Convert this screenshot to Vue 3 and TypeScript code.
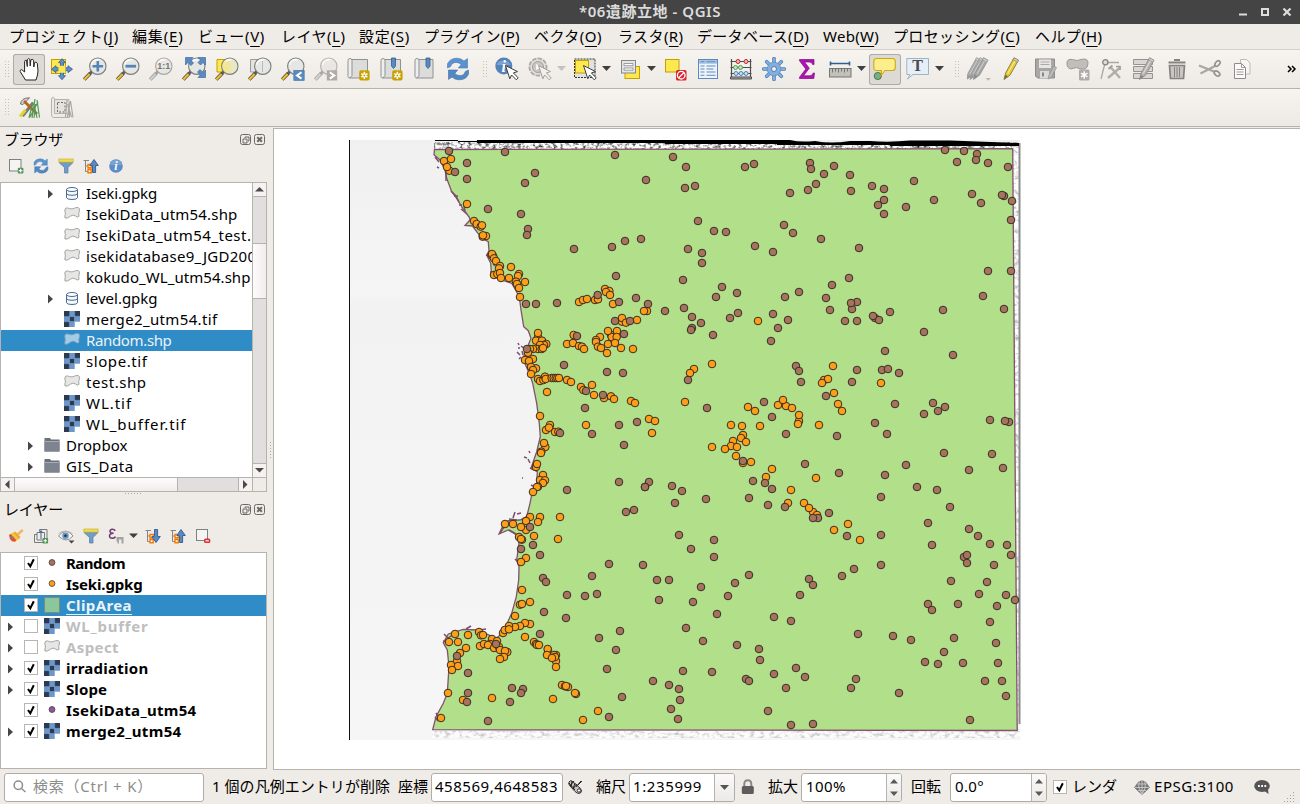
<script setup lang="ts">
import type { Directive } from 'vue'

/* Spreads a label over the given width by adjusting its letter spacing. */
const vFit: Directive<HTMLElement, number> = {
  mounted(el, binding) {
    const n = (el.textContent || '').length
    const w = el.getBoundingClientRect().width
    if (n && binding.value) el.style.letterSpacing = ((binding.value - w) / n).toFixed(3) + 'px'
  },
}

interface Menu { label: string; key: string; cell: number; width: number }
const menus: Menu[] = [
  { label: 'プロジェクト', key: 'J', cell: 123, width: 110 },
  { label: '編集', key: 'E', cell: 66, width: 51.5 },
  { label: 'ビュー', key: 'V', cell: 83, width: 67 },
  { label: 'レイヤ', key: 'L', cell: 78, width: 64.5 },
  { label: '設定', key: 'S', cell: 65, width: 51 },
  { label: 'プラグイン', key: 'P', cell: 110, width: 96 },
  { label: 'ベクタ', key: 'O', cell: 84, width: 68 },
  { label: 'ラスタ', key: 'R', cell: 79, width: 65.5 },
  { label: 'データベース', key: 'D', cell: 126, width: 112 },
  { label: 'Web', key: 'W', cell: 70, width: 56 },
  { label: 'プロセッシング', key: 'C', cell: 142, width: 127 },
  { label: 'ヘルプ', key: 'H', cell: 80, width: 67.5 },
]

const lens = (fill = '#e4e7e4', ring = '#7b7e7a', grip = '#f2c02c', tip = '#4a4a4a') =>
  `<path d="M7.5 16 1.2 22.6" stroke="${tip}" stroke-width="3.6"/><path d="M6.6 16.9 1.3 22.4" stroke="${grip}" stroke-width="2.2"/><path d="M10 13.5 7.6 16" stroke="${tip}" stroke-width="3"/><circle cx="14.8" cy="9.2" r="8.2" fill="${fill}" stroke="${ring}" stroke-width="1.1"/><path d="M8.5 8a6.6 6.6 0 0 1 8-5.2" fill="none" stroke="#fff" stroke-width="1.6" opacity=".8"/>`
const cursor = (f = '#fff', s = '#3c3c3c') =>
  `<path d="M10.5 8.500 22.500 14.600 18.400 15.900 23.200 20.900 21.300 22.800 16.600 18 14.800 21.800Z" fill="${f}" stroke="${s}" stroke-width="1"/>`
const scroll = (x = 1) =>
  `<path d="M${x + 3} 2.5H20.5V21H${x + 1.5}" fill="#dcdcda" stroke="#8f9294"/><path d="M${x} 3.5Q${x} 1.5 ${x + 2} 1.5Q${x + 4} 1.5 ${x + 4} 3.5V18.5L${x + 2} 21Q${x} 21 ${x} 19.5Z" fill="#eeeeec" stroke="#8f9294"/>`
const star = `<rect x="12.2" y="13.2" width="10.4" height="10.4" rx="1.8" fill="#c7a100"/><path d="M17.4 14.8v7.2M14.3 16.6l6.2 3.6M20.5 16.6l-6.2 3.6" stroke="#fff" stroke-width="1.5"/><circle cx="17.4" cy="18.4" r="2" fill="#fff"/><circle cx="17.4" cy="18.4" r="1" fill="#c7a100"/>`
const refresh = `<path d="M1.5 11V6.8Q4 1.2 11 1.2Q15.2 1.2 18 4L21.5 1.6V11H12.3L15.2 7.6Q13 5.4 10.2 5.4Q6 5.4 4.6 9.6Z" fill="#5b93cf" stroke="#4479b3" stroke-width=".6"/><path d="M22.5 13V17.2Q20 22.8 13 22.8Q8.800 22.800 6 20L2.500 22.400V13H11.700L8.800 16.400Q11 18.600 13.800 18.600Q18 18.600 19.400 14.400Z" fill="#5288c4" stroke="#3c6ea6" stroke-width=".6"/>`
const pencil = (x: number, c: string, w = '#eee', d = '#888') =>
  `<path d="M${x} 22.5 ${x + 1.6} 16 ${x + 10} 0.8 ${x + 14.500} 3.200 ${x + 6} 18.200Z" fill="${c}" stroke="${d}" stroke-width=".8"/><path d="M${x + 3.6} 16.8 ${x + 12} 2" stroke="${w}" stroke-width="1.100"/><path d="M${x + 9} 2.6 ${x + 10} .8 ${x + 14.500} 3.200 ${x + 13.500} 5.200Z" fill="#ccc" stroke="${d}" stroke-width=".5"/><path d="M${x} 22.500 ${x + 1.200} 17.700 ${x + 4.200} 19.600Z" fill="${d}"/>`
const raster = `<rect width="16" height="16" fill="#6d96c9"/><path d="M0 0h5.300v5.300h-5.300zM10.700 0h5.300v5.300h-5.300zM5.800 5.800h4.400v4.400h-4.400zM0 10.700h5.300v5.300h-5.300z" fill="#2b3a50"/><path d="M10.700 10.700h5.300v5.300h-5.300z" fill="#fff"/><path d="M5.300 5.300v10.700M10.700 0v10.700M0 10.700h10.700M5.300 5.300h10.700" stroke="#87a9d4" stroke-width=".4"/>`
const shape = (a: string, b: string) =>
  `<path d="M.800 3.500Q1 1.200 3.500 1.400Q5 2.300 8 2.400Q10 2 11.500 1.200Q15 .300 15.400 2.300Q15.600 5 14.700 7L15 9.800Q13.500 11.500 11.500 9.500Q9 7.600 6.500 9.600Q3.500 12.300 1 11.500Q.600 9.500 1.400 7.500Z" transform="translate(0 .5)" fill="${a}" stroke="${b}" stroke-width=".9"/>`
const tree = `<path d="M.500 2.500H6M2.500 2.500V13.500H5M2.500 8H5" stroke="#85858a" fill="none"/><path d="M5 6.500h3.200v3.200h-3.200zM5 11.500h3.200v3.200h-3.200z" fill="#fff" stroke="#f57900" stroke-width="1.400"/>`
const funnel = `<path d="M1 4.500H15L10 9.500V15H6.500V9.500Z" fill="#6f9ccb" stroke="#4f7cab" stroke-width=".7"/><path d="M.800 1H15.200V4.200H.800Z" fill="#f0dc4a" stroke="#c2a92a" stroke-width=".6"/>`

const icons: Record<string, string> = {
  pan: `<path d="M8.500 23 3.200 14.600Q2.800 12.800 4.600 12.600L7.600 15V4.600Q7.800 2.600 9.500 3.400L10.300 9.500V2.600Q11.200.800 12.800 2.200L13.200 9 13.800 3Q15.200 1.400 16.600 3.200L16.800 10 17.600 5.600Q19.200 4.200 20.300 6.200L21 14Q21 17.500 19 23Z" fill="#fff" stroke="#222" stroke-width="1"/>`,
  panSel: `<rect x="1.500" y="2.500" width="14" height="14" fill="#fce94f" stroke="#c4a000"/><path d="M11.500 2 15 6H13v5h4.500V9L22 12.500 17.500 16V14H13v5h2L11.500 23 8 19h2V14H5.500v2L1 12.500 5.500 9v2H10V6H8Z" transform="translate(.5 -.3)" fill="#5f8fc4" stroke="#2e5c8f" stroke-width=".8"/><rect x="8.500" y="8.800" width="7" height="7" fill="#fce94f"/>`,
  zoomIn: lens() + `<path d="M14.800 4v10.500M9.500 9.200h10.600" stroke="#5483b8" stroke-width="2.600"/>`,
  zoomOut: lens() + `<path d="M9.500 9.200h10.600" stroke="#5483b8" stroke-width="2.800"/>`,
  zoomNative: lens('#e8e6e2', '#a9a7a4', '#d2d0cd', '#9c9a97') + `<text x="14.800" y="12.300" text-anchor="middle" font-family="Liberation Sans, sans-serif" font-size="9" font-weight="700" fill="#777">1:1</text>`,
  zoomFull: lens() + `<path d="M3.500.500H11L8.800 3 11.500 6 9 8.500 6 5.500 3.500 8ZM23.500.500V8L21 5.500 18.500 8 16 5.500 18.500 3 16 .500ZM23.500 20.500H16L18.200 18 15.500 15 18 12.500 21 15.500 23.500 13Z" fill="#5c8abf" stroke="#3f6da3" stroke-width=".7"/>`,
  zoomSel: `<path d="M2 2.500H15V15H2Z" fill="#fce94f" stroke="#c4a000"/>` + lens('#e9e8c6') + `<path d="M9 4.500h6.500v11.500h-4Q7 13 7.500 8Z" fill="#f3e68a" opacity=".8"/>`,
  zoomLayer: `<path d="M2.500 2.500H15V15H2.500Z" fill="#e2e4e4" stroke="#9a9c9c"/>` + lens() + `<path d="M14.500 4v11" stroke="#bbb"/>`,
  zoomLast: lens() + `<rect x="12.800" y="13.300" width="10.400" height="10.200" fill="#5c8abf" stroke="#4372a8" stroke-width=".6"/><path d="M20.500 15.200 16 18.400 20.500 21.600" fill="none" stroke="#fff" stroke-width="2"/>`,
  zoomNext: lens('#eae7e3', '#b5b2ae', '#d5d3d0', '#a09e9b') + `<rect x="12.800" y="13.300" width="10.400" height="10.200" fill="#aeaba8"/><path d="M15.800 15.200 20.300 18.400 15.800 21.600" fill="none" stroke="#fff" stroke-width="2"/>`,
  mapNew: scroll() + star,
  bookNew: scroll() + `<path d="M11.500 1h4v8l-2 2.500-2-2.500Z" fill="#5c8abf" stroke="#2e5c8f" stroke-width=".8"/>` + star,
  book: scroll(2).replace('20.5', '20') + `<path d="M13 1h4v8l-2 2.500-2-2.500Z" fill="#5c8abf" stroke="#2e5c8f" stroke-width=".8"/>`,
  refresh,
  identify: `<circle cx="8.800" cy="9" r="8.500" fill="#5483b8"/><path d="M1.500 8a7.500 7 0 0 1 14 0" fill="#7ba2cf"/><text x="8.800" y="14.500" text-anchor="middle" font-family="Liberation Serif, serif" font-style="italic" font-weight="700" font-size="16" fill="#fff">i</text>` + cursor(),
  action: `<circle cx="10" cy="10" r="8.600" fill="#e0deda" stroke="#aaa8a5" stroke-width="1.800" stroke-dasharray="4.500 1.200"/><circle cx="10" cy="10" r="5.500" fill="#c9c7c4" stroke="#a19f9c"/><path d="M8.200 7 13 10l-4.800 3Z" fill="#fff"/>` + cursor('#f2f0ee', '#a09e9b'),
  select: `<rect x="1.500" y="2" width="20.500" height="18.500" fill="#dfe1e2" stroke="#333" stroke-dasharray="2 1"/><rect x="2.500" y="3.500" width="13" height="12.500" fill="#fce94f" stroke="#c4a000"/>` + cursor(),
  selectForm: `<rect x="7" y="9.500" width="14.500" height="12" fill="#fce94f" stroke="#c4a000"/><rect x="3.500" y="3.500" width="14" height="12.500" fill="#e3e5e6" stroke="#85888a"/><path d="M6 6.500h9v2.200H6ZM6 11h9v2.200H6Z" fill="#fff" stroke="#85888a" stroke-width=".8"/>`,
  deselect: `<rect x="2.500" y="2.500" width="13.500" height="12.500" fill="#fce94f" stroke="#c4a000"/><rect x="13" y="13" width="10.500" height="10.500" rx="1.500" fill="#d9252c"/><circle cx="18.200" cy="18.200" r="3.800" fill="none" stroke="#fff" stroke-width="1.300"/><path d="M15.500 21 21 15.500" stroke="#fff" stroke-width="1.300"/>`,
  table: `<rect x="2.500" y="2.500" width="19" height="19" fill="#eef4f9" stroke="#5c8abf"/><path d="M3 3h18v3.800H3Z" fill="#a8c5e4"/><path d="M4.500 4.800h4M10.500 4.800h9M4.500 9h4M10.500 9h9M4.500 12h4M10.500 12h7M4.500 15h4M10.500 15h9M4.500 18.200h4M10.500 18.200h9" stroke="#5c8abf" stroke-width="1.100"/>`,
  abacus: `<path d="M2.500 2v20M21.500 2v20M1.500 4.500h21M1.500 10.500h21M1.500 16.500h21" stroke="#4d4d4d" stroke-width="1.200"/><path d="M1.500 22v-2h21v2Z" fill="#aaa" stroke="#4d4d4d"/><g stroke-width="1"><g fill="#f4b4b4" stroke="#b5272d"><circle cx="9" cy="4.500" r="2"/><circle cx="17" cy="4.500" r="2"/></g><g fill="#bfe6bb" stroke="#58a055"><circle cx="6.500" cy="10.500" r="2"/><circle cx="11.500" cy="10.500" r="2"/></g><g fill="#c5dff2" stroke="#4c86b8"><circle cx="7" cy="16.500" r="2"/><circle cx="12" cy="16.500" r="2"/><circle cx="17" cy="16.500" r="2"/></g></g>`,
  gear: `<path d="M12 1.600v20.800M1.600 12h20.800M4.700 4.700l14.600 14.600M19.300 4.700 4.700 19.300" stroke="#4d80b8" stroke-width="3.600" stroke-linecap="round"/><path d="M12 1.600v20.800M1.600 12h20.800M4.700 4.700l14.600 14.600M19.300 4.700 4.700 19.300" stroke="#83aede" stroke-width="2.200" stroke-linecap="round"/><circle cx="12" cy="12" r="6.800" fill="#83aede" stroke="#5f90c6" stroke-width=".8"/><circle cx="12" cy="12" r="2.500" fill="#f4f1ed" stroke="#4d80b8"/>`,
  sigma: `<path d="M4.500 2.500H19V7.500H17.600Q17.300 5 14.500 5H9.500L14.300 11.200 8.500 18.800H15Q17.600 18.800 18.200 16H19.500L18.800 21.500H4.500V20.300L10.800 12 4.500 3.700Z" fill="#b012b4" stroke="#7c0a80" stroke-width=".7"/>`,
  measure: `<path d="M2 6.500H22M2.500 4.500v4M21.500 4.500v4" stroke="#2f5f92" stroke-width="1.600"/><rect x="1.500" y="11.500" width="21.500" height="8.500" fill="#c2c0bb" stroke="#77756f"/><path d="M4.500 12v3.500M7.500 12v2.500M10.500 12v3.500M13.500 12v2.500M16.500 12v3.500M19.500 12v2.500" stroke="#77756f"/>`,
  tips: `<circle cx="4.800" cy="19" r="3.600" fill="#74b37b" stroke="#3f5b49" stroke-width=".8"/><path d="M3.500 1.500H19.500Q22.300 1.500 22.300 4.500V10.500Q22.300 13.500 19.500 13.500H12L8 18.500 8.500 13.500H3.500Q.800 13.500 .800 10.500V4.500Q.800 1.500 3.500 1.500Z" fill="#fcee8c" stroke="#cfa90c" stroke-width="1.100"/>`,
  note: `<path d="M.800 1.500H22.500V17.500H7L1.500 22 4 17.500H.800Z" fill="#e6eff8" stroke="#9db4c4"/><text x="11.700" y="14.300" text-anchor="middle" font-family="Liberation Serif, serif" font-weight="700" font-size="16" fill="#4a4a4a">T</text>`,
  pencils: pencil(-.5, '#aaa', '#ccc', '#999') + pencil(3, '#aaa', '#ccc', '#999') + pencil(6.500, '#a6a6a6', '#ccc', '#8e8e8e') + `<path d="M18.500 21h5.500L21.200 23.800Z" fill="#bbb8b5"/>`,
  pencil: pencil(4, '#e6c82e', '#fcee8c', '#777045'),
  save: `<path d="M2.500 2H21.500V21H4.500L2.500 19Z" fill="#a9a7a5" stroke="#8e8c8a"/><path d="M6 2.500H18V11H6Z" fill="#e8e6e4"/><path d="M7.500 5h9M7.500 7.500h9" stroke="#aaa"/><path d="M7 14h9v7H7Z" fill="#dddbd9"/><path d="M9 15.500h2v4H9Z" fill="#888"/><path d="M15 22 16 18 21 9 23.500 10.500 18.500 20Z" fill="#bbb" stroke="#8e8c8a" stroke-width=".7"/>`,
  addFeat: `<path d="M1 6Q1 1.500 6.500 2.500Q11 4.500 15 2.500Q21 .800 22 5Q22 11.500 18 12Q13 12.500 10.500 10.500Q7 11.500 5 12Q.500 11 1 6Z" fill="#c0bdba" stroke="#9a9896"/><rect x="13" y="12.500" width="10.500" height="11" rx="1.500" fill="#aeaba8"/><path d="M18.200 14.200v7.600M15 16.200l6.500 3.600M21.500 16.200 15 19.800" stroke="#fff" stroke-width="1.500"/>`,
  vertex: `<path d="M2 22 6 6M8.500 5.500H20" stroke="#aaa8a5" stroke-width="1.300"/><circle cx="6.300" cy="5.300" r="2.600" fill="#ddd" stroke="#85837f" stroke-width="1.300"/><path d="M11 9.500 21 21M20.500 11 9 21" stroke="#b0aeab" stroke-width="2.400"/><path d="M13.500 8.500 9.500 12M17 9.500h4v3.500" stroke="#a09e9b" stroke-width="1.700" fill="none"/>`,
  multi: `<path d="M1.500 2.500h19v5h-19ZM1.500 9.500h19v5h-19ZM1.500 16.500h19v5h-19Z" fill="#d9d6d3" stroke="#95938f"/>` + pencil(7.500, '#b5b3b0', '#ddd', '#8a8885'),
  trash: `<path d="M3.500 5.500h17M9 3h6" stroke="#85827f" stroke-width="2"/><path d="M4.500 8.500H19.500L18.500 21.500H5.500Z" fill="#c9c6c3" stroke="#85827f" stroke-width="1.700"/><path d="M9.500 10v10M12 10v10M14.500 10v10" stroke="#85827f" stroke-width="1"/>`,
  cut: `<path d="M1 8.500 16 14.500M2.500 16.500 18 8.500" stroke="#a9a7a4" stroke-width="2.200"/><ellipse cx="19.500" cy="6.500" rx="3.200" ry="2" transform="rotate(-50 19.500 6.500)" fill="none" stroke="#94918e" stroke-width="1.700"/><ellipse cx="19" cy="16.500" rx="3.200" ry="2" transform="rotate(40 19 16.500)" fill="none" stroke="#94918e" stroke-width="1.700"/>`,
  copy: `<path d="M9.500 2.500H15.500L19 6V17H9.500Z" fill="#f7f5f3" stroke="#bcbab7"/><path d="M3.500 6.500H10.500L14.500 10.500V21.500H3.500Z" fill="#fbfaf9" stroke="#8e8c89"/><path d="M10.500 6.500v4h4M5.500 12.500h7M5.500 15h7M5.500 17.500h7" fill="none" stroke="#9e9c99"/>`,
  grass: `<path d="M5.500 20 16 7" stroke="#777" stroke-width="3.200"/><path d="M3 20.500 8.500 14" stroke="#e0d52c" stroke-width="3"/><path d="M3.500 8 Q4 2 12.500 1.800L9.500 5 6 8.500Z" fill="#d5d7d4" stroke="#555" stroke-width=".8"/><path d="M7 5 20 18" stroke="#b4651e" stroke-width="2.800"/><path d="M12 22 16 6M15 22 18 3M17 22 18.500 8M20 22 17.500 10M22.500 21.500 20 4M13 21 21 6" stroke="#4f9a55" stroke-width="1.200"/>`,
  region: `<path d="M4 3.500H19V20H4.500" fill="#e6e3df" stroke="#b5b2ae"/><path d="M1.500 3Q3-1 4.500 3V17.500H19.500V21.500H3.500Q1.500 21.500 1.500 18Z" fill="#eeebe7" stroke="#b5b2ae"/><path d="M7.500 6.500H15V16H7.500Z" fill="none" stroke="#6d6d6d" stroke-dasharray="2 1.500"/><path d="M15.500 21 17 4M17.500 21 20 6M19.500 21 18 8M23 21.500 20.500 5M21.500 21 18 10" stroke="#a9a7a4" stroke-width="1.200"/>`,
}

const small: Record<string, string> = {
  add: `<rect x="1.500" y="1.500" width="11.500" height="11.500" fill="#f5f4f2" stroke="#7c8284"/><rect x="9.800" y="9.800" width="5.600" height="5.600" rx="1" fill="#51935a"/><path d="M12.600 10.800v3.600M10.800 12.600h3.600" stroke="#fff" stroke-width="1.100"/>`,
  refresh: `<g transform="scale(.667)">${refresh}</g>`,
  funnel,
  up: tree + `<path d="M9.500 14.500V7.500H6.800L11 1.500 15.300 7.500H12.600V14.500Z" fill="#5c8abf" stroke="#36659c"/>`,
  down: tree + `<path d="M9.500 1.500V8.500H6.800L11 14.500 15.300 8.500H12.600V1.500Z" fill="#5c8abf" stroke="#36659c"/>`,
  info: `<circle cx="8" cy="8" r="6.800" fill="#5c8dc5"/><path d="M2 7a6 5 0 0 1 12 0" fill="#78a3d4"/><text x="7.900" y="12" text-anchor="middle" font-family="Liberation Serif, serif" font-style="italic" font-weight="700" font-size="12" fill="#fff">i</text>`,
  style: `<path d="M1 7 5.500 4.200 11.500 10.800 7 13.800Q2.500 12.500 1 7Z" fill="#f0c92a"/><path d="M1 7Q1.200 11 4 13.200L7 13.800 8.200 12 2.800 6Z" fill="#e0503f"/><path d="M3.300 8 5.500 9.200 4.500 10.800 2.500 9.500Z" fill="#5c8abf"/><path d="M5.300 4.800 7.200 3.600 12.500 9 11 10.800Z" fill="#f3a04c"/><path d="M9.500 6.500 14.800 2" stroke="#edb95c" stroke-width="2.400"/>`,
  group: `<path d="M1.500 6.500H4M1.500 6.500v8h9M4 4.500h7.500v7.500H4Z" fill="none" stroke="#777b7c"/><path d="M6.500 3.500V1.500H14V10" fill="none" stroke="#777b7c"/><path d="M8 11V3M6.300 5 8 2.500 9.700 5" stroke="#36659c" fill="none"/><rect x="9.500" y="10" width="5.600" height="5.600" rx="1" fill="#51935a"/><path d="M12.300 11v3.600M10.500 12.800h3.600" stroke="#fff"/>`,
  eye: `<path d="M.500 8Q4 3.500 8 3.500T15 8Q11.500 12 8 12T.500 8Z" fill="#f4f4f4" stroke="#8c8f90"/><path d="M.500 5.500Q7 .500 14.500 5.500" fill="none" stroke="#bcbab7"/><circle cx="7.500" cy="7.800" r="3.300" fill="#6c96c6"/><circle cx="7.500" cy="7.800" r="1.300" fill="#1c2f45"/><path d="M10.500 12.500H16.500L13.500 15.500Z" fill="#444"/>`,
  expr: `<path d="M7.300 2.800Q6 1 4 1.200Q1.700 1.700 2 3.800Q2.500 5.500 5.500 5.300Q1.400 5.400 1.500 8Q1.700 10.500 4.700 10.300Q6.800 10 7.500 8.600" fill="none" stroke="#6c3a74" stroke-width="1.500"/><path d="M8.500 9h7v6.500h-2v-4h-2.500v4h-1.500V13.500h-1Z" fill="#a5a3a1"/>`,
  remove: `<rect x="1.500" y="1.500" width="11" height="11" fill="#f5f4f2" stroke="#7c8284"/><rect x="9" y="10.500" width="6.300" height="4.500" rx="1.500" fill="#e0313a"/><path d="M10.500 12.800h3.300" stroke="#fff" stroke-width="1.200"/>`,
  db: `<path d="M2.500 4.500V12.800Q3 14.500 8 14.500T13.500 12.800V4.500" fill="#f4f7fa" stroke="#4a6b90"/><ellipse cx="8" cy="4.500" rx="5.500" ry="2" fill="#fff" stroke="#4a6b90"/><path d="M2.500 8.500Q3 10.300 8 10.300T13.500 8.500" fill="none" stroke="#4a6b90"/>`,
  shp: shape('#e6e6e5', '#9b9b9a'),
  shpSel: shape('#a3cbe4', '#7fa9c6'),
  tif: raster,
  folder: `<path d="M.500 1H6L7 2.500H15.500V14.500H.500Z" fill="#6c7077"/><path d="M.500 4H15.500V14.500H.500Z" fill="#7e8390"/><path d="M.500 4.500h15" stroke="#a8adb5"/>`,
  dotBrown: `<circle cx="8" cy="7.500" r="2.900" fill="#a8735a" stroke="#5d5048"/>`,
  dotOrange: `<circle cx="8" cy="7.500" r="2.900" fill="#ff9e17" stroke="#6a5a3e"/>`,
  dotPurple: `<circle cx="8" cy="7.500" r="2.900" fill="#8d5a99" stroke="#5d4a61"/>`,
  area: `<rect x=".5" y=".5" width="15" height="15" fill="#8bc79b" stroke="#7b8b7e"/>`,
}

interface Tool { icon: string; on?: boolean; drop?: '' | 'dark' | 'faint'; grip?: boolean }
const tools: Tool[] = [
  { icon: 'pan', on: true }, { icon: 'panSel' }, { icon: 'zoomIn' }, { icon: 'zoomOut' }, { icon: 'zoomNative' },
  { icon: 'zoomFull' }, { icon: 'zoomSel' }, { icon: 'zoomLayer' }, { icon: 'zoomLast' }, { icon: 'zoomNext' },
  { icon: 'mapNew' }, { icon: 'bookNew' }, { icon: 'book' }, { icon: 'refresh' },
  { icon: 'identify', grip: true }, { icon: 'action', drop: 'faint' }, { icon: 'select', drop: 'dark' },
  { icon: 'selectForm', drop: 'dark' }, { icon: 'deselect' }, { icon: 'table' }, { icon: 'abacus' }, { icon: 'gear' },
  { icon: 'sigma' }, { icon: 'measure', drop: 'dark' }, { icon: 'tips', on: true }, { icon: 'note', drop: 'dark' },
  { icon: 'pencils', grip: true }, { icon: 'pencil' }, { icon: 'save' }, { icon: 'addFeat' }, { icon: 'vertex' },
  { icon: 'multi' }, { icon: 'trash' }, { icon: 'cut' }, { icon: 'copy' },
]

interface Node { text: string; icon: string; w: number; arrow?: boolean; top?: boolean; sel?: boolean }
const files: Node[] = [
  { text: 'Iseki.gpkg', icon: 'db', w: 71, arrow: true },
  { text: 'IsekiData_utm54.shp', icon: 'shp', w: 151.5 },
  { text: 'IsekiData_utm54_test.shp', icon: 'shp', w: 192.5 },
  { text: 'isekidatabase9_JGD2000.shp', icon: 'shp', w: 210 },
  { text: 'kokudo_WL_utm54.shp', icon: 'shp', w: 164.5 },
  { text: 'level.gpkg', icon: 'db', w: 71.5, arrow: true },
  { text: 'merge2_utm54.tif', icon: 'tif', w: 131.5 },
  { text: 'Random.shp', icon: 'shpSel', w: 85.5, sel: true },
  { text: 'slope.tif', icon: 'tif', w: 61.5 },
  { text: 'test.shp', icon: 'shp', w: 60.5 },
  { text: 'WL.tif', icon: 'tif', w: 46 },
  { text: 'WL_buffer.tif', icon: 'tif', w: 100.5 },
  { text: 'Dropbox', icon: 'folder', w: 61.5, arrow: true, top: true },
  { text: 'GIS_Data', icon: 'folder', w: 67.5, arrow: true, top: true },
]

interface Layer { text: string; icon: string; w: number; on: boolean; arrow?: boolean; sel?: boolean }
const layers: Layer[] = [
  { text: 'Random', icon: 'dotBrown', w: 59, on: true },
  { text: 'Iseki.gpkg', icon: 'dotOrange', w: 76.5, on: true },
  { text: 'ClipArea', icon: 'area', w: 66, on: true, sel: true },
  { text: 'WL_buffer', icon: 'tif', w: 82.500, on: false, arrow: true },
  { text: 'Aspect', icon: 'shp', w: 53, on: false, arrow: true },
  { text: 'irradiation', icon: 'tif', w: 82.500, on: true, arrow: true },
  { text: 'Slope', icon: 'tif', w: 41, on: true, arrow: true },
  { text: 'IsekiData_utm54', icon: 'dotPurple', w: 130.500, on: true },
  { text: 'merge2_utm54', icon: 'tif', w: 115.500, on: true, arrow: true },
]

/* Sites per map sheet: sheet origin, then coordinates in thirds of a pixel. */
type Sheet = [number, number, string]
const parse = (sheets: Sheet[]) =>
  sheets.flatMap(([ox, oy, s]) =>
    s.trim().split(/\s+/).map((p) => {
      const [x, y] = p.split(',').map(Number)
      return { x: ox + x / 3, y: oy + y / 3 }
    }),
  )

const orange = parse([
  [420, 130, `88,122 72,93 93,87 81,111 141,222 162,273 170,282 182,290 186,286 188,320 198,318 189,316 219,378 215,375 216,372 222,385 228,393 240,408 237,415 222,435 232,432 240,429 243,444 267,444 273,411 297,432 294,438 288,455 291,462 315,456 297,474 300,501 477,516 489,510 501,507 525,510 534,508 555,477 568,483 558,486 570,495 579,522 606,575 606,564 618,578 651,570 573,615 575,621 564,603 591,603 590,621 461,615 441,642 459,639 477,648 486,650 492,657 540,621 528,630 528,636 534,650 543,654 564,642 585,639 561,669 603,654 639,657 354,621 354,609 348,632 366,632 379,642 372,645 360,645 354,657 365,657 369,654 339,657 330,657 324,668 339,687 315,690 327,693 348,715 333,711 339,720 333,732 354,747 360,753 370,750 375,740 377,747 395,744 401,744 407,744 412,744 417,744 441,750 453,756 483,771 516,765 490,780 522,795 552,804 573,799 582,807 633,813 645,819 381,786 360,858`],
  [640, 130, `21,543 12,543 354,573`],
  [640, 340, `216,72 162,87 150,99 135,186 324,201 345,213 414,195 438,198 429,180 456,204 477,243 477,225 474,252 537,255 579,78 552,120 564,117 546,129 582,159 594,192 606,213 723,129 27,237 45,243 36,279 273,255 306,258 360,258 309,285 303,294 318,306 279,303 273,318 291,321 255,327 216,321 288,348 309,369 333,366 396,387 378,411 453,450 444,489 492,489 519,516 507,504 531,525 528,414 624,552 582,570 660,600`],
  [420, 420, `390,15 378,30 387,23 405,36 415,35 498,15 376,81 372,69 364,95 363,99 348,141 351,132 369,165 360,180 375,181 369,189 354,200 351,201 339,216 330,291 360,291 354,306 318,330 318,303 303,321 255,312 279,312 420,291 414,357 342,348 297,351 306,359 303,357 318,414 303,426 306,510 300,554 306,552 330,546 285,588 330,612 315,609 300,618 285,621 267,618 249,639 254,630 267,628 315,651 342,666 348,672 351,675 357,675 384,690 383,687 381,705 408,705 402,705 408,723 405,711 396,714 408,741 105,642 87,666 114,666 144,645 177,636 183,646 189,645 180,678 192,672 216,657 231,663 210,672 204,675 222,684 237,681 240,690 262,696 255,693 252,711 240,717 138,684 120,699 111,723 93,735 114,738 96,750 84,819 129,840 216,834 63,894 426,795 444,801 435,799 438,798 468,822 465,819 399,837 534,873 489,900`],
])

const brown = parse([
  [420, 130, `87,63 255,66 585,75 141,99 105,126 345,129 141,147 315,159 204,237 303,252 324,297 321,315 615,333 576,351 462,357 588,438 648,504 597,516 318,522 348,522 411,519 533,495 585,573 630,573 612,612 471,618 321,657 432,705 561,726 609,729 498,783 549,795 495,834`],
  [640, 130, `99,81 138,111 18,150 135,174 165,168 315,111 342,102 510,99 513,117 582,108 552,132 630,135 528,162 504,180 450,189 633,183 696,168 732,177 732,210 714,225 732,252 822,153 798,231 882,210 915,60 972,63 1011,72 951,96 1008,90 1044,99 1104,111 996,192 1023,219 1092,198 1086,195 1116,213 1113,270 174,273 222,303 258,306 3,327 144,357 186,369 186,399 129,450 345,348 399,366 432,285 459,309 543,327 657,354 24,522 75,543 132,534 246,471 228,501 291,489 156,561 183,579 156,594 153,600 219,615 270,564 294,549 435,501 477,486 399,552 444,570 414,594 393,633 627,444 576,465 558,504 570,540 651,516 636,537 633,519 615,573 651,573 705,564 717,570 699,558 750,546 852,606 909,540 1029,498 1044,423 1113,423 1092,537`],
  [640, 340, `735,33 939,45 144,120 201,204 468,78 477,93 483,126 651,90 636,126 726,90 744,87 777,99 372,186 396,231 558,168 438,282 591,288 705,249 741,282 765,192 852,222 879,189 894,213 915,201 1050,240 1107,246 1095,243 309,363 495,372 597,399 339,423 375,429 396,447 327,474 384,495 435,501 567,519 534,534 519,534 621,588 735,405 723,471 723,585 798,375 831,441 891,450 912,339 1056,342 987,390 1089,384 930,501 864,549 987,567 1014,588 27,426 15,441 96,438 126,453 105,489 198,477 117,585 222,600`],
  [640, 540, `153,27 222,51 9,75 51,120 87,120 57,180 183,141 159,186 285,129 327,105 264,168 231,222 138,264 189,303 291,315 357,327 360,360 402,231 453,243 480,165 507,117 519,135 606,108 642,87 723,75 654,282 759,288 813,300 876,15 972,51 981,45 981,69 1050,12 1101,15 1113,45 1062,75 933,123 1041,126 1017,162 1098,165 1125,180 1071,198 954,192 864,192 876,210 1050,246 942,294 1068,309 912,336 855,366 894,372 969,369 1074,369 1035,423 1086,423 1098,468 990,540 777,459 633,444 648,417 468,384 495,411 402,402 438,444 318,417 327,423 216,396 129,393 39,423 87,435 117,447 120,480 93,507 114,537 384,513 453,555 519,552`],
  [420, 420, `597,15 651,6 420,39 516,42 612,75 597,186 675,201 441,210 618,276 642,270 330,321 339,375 303,387 360,405 567,432 369,474 378,486 516,468 441,525 495,528 531,522 372,576 438,594 360,642 600,633 537,654 588,690 561,747 228,672 111,708 144,759 144,819 141,846 276,804 309,807 303,819 270,846 204,903 606,831 567,891`],
])

const area = '434.500,149.500 434,154.700 440,160 445,170 446.700,178.300 451.700,191.700 456.700,198.300 462.700,208.300 469.300,217.300 470,220 465,225.500 472.500,226 481.700,238.300 488.300,241.700 489,250.700 486.700,255 490.700,263.300 491.700,276.700 495,277 501.700,280 511.700,283.300 519.300,296.700 521,310 523.700,326.700 528.300,330.700 531,338.300 528.300,345 525,350 523.300,360 530,375 532.700,383.300 536.700,403.300 539.300,423.300 540.300,436.700 536.700,451.700 531,468.300 537.300,471.700 536.700,483.300 532.300,491.700 530,503.300 526.700,516.700 520,520 508.300,520.700 503.300,525 499,534 508.300,530 516.700,535 519,543.300 516.700,560 519,566.700 518.700,580 516.300,596.700 511.700,613.300 503.300,631.700 496.700,638.300 485,633.300 476.700,630 463.300,629.300 448.300,634 443.300,642.700 447.300,650 449,666.700 447.300,693.300 443.300,703.300 436,716.700 432.700,729.700 1017.200,730.500 1012.700,148.700'
const land = area.replace('434.500,149.500', '434.500,142').replace('1012.700,148.700', '1020,142').replace('432.700,729.700 1017.200,730.500', '430,740 1020,740')

/* Reefs and islets along the coast. */
const islets = 'M435 157l4 5M437 167l2 1M446 173l0 8M451 191l5 5 3 6M454 196l4 0M459 205l3 0M461 209l6 5M464 206l1 5M486 255l3 1M491 271l0 6M493 264l2 2M518 343l1 2M517 352l3 3M521 346l4 3M519 359l2-2M522 351l1 4M518 348l2 0M529 451l1 2M524 457l3 1M528 459l2 4M530 468l4 2M522 478l1 0M531 485l4 2M513 518l2-6M517 514l4-1M509 519l8 1M500 533l4-6M509 530l7 4M515 559l3 3M444 634l4 4 6-4M443 641l4 1M466 629l5-3M480 630l6-1M436 713l2 3M435 717l3 4'
</script>

<template>
  <div class="window">
    <header class="titlebar">
      <span></span>
      <b v-fit="142">*06遺跡立地 - QGIS</b>
      <svg width="60" height="24"><path d="M4 14.500h8" stroke="#ddd" stroke-width="2" /><rect x="27" y="9" width="6" height="6" fill="none" stroke="#ddd" stroke-width="2" /><path d="M48.500 8.500 55.500 15.500M55.500 8.500 48.500 15.500" stroke="#ddd" stroke-width="2.200" /></svg>
    </header>

    <nav class="menubar">
      <div v-for="m in menus" :key="m.key" :style="{ width: m.cell + 'px' }"><span v-fit="m.width">{{ m.label }}(<u>{{ m.key }}</u>)</span></div>
    </nav>

    <div class="toolbar main">
      <i class="grip first"></i>
      <template v-for="t in tools" :key="t.icon">
        <i v-if="t.grip" class="grip"></i>
        <span class="tool" :class="{ on: t.on }"><svg width="24" height="24" viewBox="0 0 24 24" fill="none" v-html="icons[t.icon]"></svg></span>
        <svg v-if="t.drop" class="drop" width="12" height="6"><path d="M0 0h9L4.500 5Z" :fill="t.drop === 'dark' ? '#3f3f3f' : '#c4c1be'" /></svg>
      </template>
      <svg class="more" width="10" height="8"><path d="M1 1l3 3-3 3M5 1l3 3-3 3" fill="none" stroke="#000" stroke-width="1.500" /></svg>
    </div>
    <div class="toolbar second">
      <i class="grip first"></i>
      <span class="tool"><svg width="24" height="24" viewBox="0 0 24 24" fill="none" v-html="icons.grass"></svg></span>
      <span class="tool"><svg width="24" height="24" viewBox="0 0 24 24" fill="none" v-html="icons.region"></svg></span>
    </div>

    <main>
      <aside>
        <div class="dock-title"><span v-fit="59">ブラウザ</span>
          <svg width="28" height="12" fill="none" stroke="#6b6967"><rect x=".5" y=".5" width="10" height="10" rx="2" /><path d="M5 4V3h4v4H8M3 5h4v4H3Z" /><rect x="14.500" y=".5" width="10" height="10" rx="2" /><path d="M17.300 3.200l4.600 4.600M21.900 3.200l-4.600 4.600" stroke-width="2" /></svg>
        </div>
        <div class="dock-tools browser-tools">
          <span v-for="n in ['add', 'refresh', 'funnel', 'up', 'info']" :key="n"><svg width="16" height="16" fill="none" v-html="small[n]"></svg></span>
        </div>
        <div class="box tree-box">
          <div class="rows">
            <div v-for="f in files" :key="f.text" class="row" :class="{ sel: f.sel, top: f.top }">
              <svg class="arrow" width="7" height="10"><path v-if="f.arrow" d="M1 .5 6 5 1 9.500Z" fill="#464646" /></svg>
              <svg class="ico" width="16" height="16" fill="none" v-html="small[f.icon]"></svg>
              <span v-fit="f.w">{{ f.text }}</span>
            </div>
          </div>
          <div class="vbar">
            <i class="btn"><svg width="9" height="5"><path d="M0 4.500 4.500 0 9 4.500Z" fill="#4a4a4a" /></svg></i><i class="track a"></i><i class="thumb"></i><i class="track"></i>
            <i class="btn last"><svg width="9" height="5"><path d="M0 0h9L4.500 4.500Z" fill="#4a4a4a" /></svg></i>
          </div>
          <div class="hbar">
            <i class="btn"><svg width="5" height="9"><path d="M4.500 0v9L0 4.500Z" fill="#4a4a4a" /></svg></i><i class="thumb"></i><i class="track"></i>
            <i class="btn last"><svg width="5" height="9"><path d="M0 0v9L4.500 4.500Z" fill="#4a4a4a" /></svg></i>
          </div>
          <div class="corner"></div>
        </div>
        <div class="split"><i></i></div>
        <div class="dock-title layers-title"><span v-fit="59">レイヤー</span>
          <svg width="28" height="12" fill="none" stroke="#6b6967"><rect x=".5" y=".5" width="10" height="10" rx="2" /><path d="M5 4V3h4v4H8M3 5h4v4H3Z" /><rect x="14.500" y=".5" width="10" height="10" rx="2" /><path d="M17.300 3.200l4.600 4.600M21.900 3.200l-4.600 4.600" stroke-width="2" /></svg>
        </div>
        <div class="dock-tools layer-tools">
          <span v-for="n in ['style', 'group', 'eye', 'funnel', 'expr']" :key="n"><svg width="17" height="16" fill="none" v-html="small[n]"></svg></span>
          <svg class="ldrop" width="12" height="6"><path d="M0 .5h9L4.500 5Z" fill="#3f3f3f" /></svg>
          <span v-for="n in ['down', 'up', 'remove']" :key="n"><svg width="16" height="16" fill="none" v-html="small[n]"></svg></span>
        </div>
        <div class="box layer-box">
          <div v-for="l in layers" :key="l.text" class="row layer" :class="{ sel: l.sel, off: !l.on }">
            <svg class="arrow" width="7" height="10"><path v-if="l.arrow" d="M1 .5 6 5 1 9.500Z" fill="#464646" /></svg>
            <svg class="check" width="14" height="14"><rect x=".5" y=".5" width="13" height="13" fill="#fff" stroke="#b9b5b1" /><path v-if="l.on" d="M4 7 6.300 10.300 9.800 3.300" fill="none" stroke="#000" stroke-width="2" /></svg>
            <svg class="ico" width="16" height="16" fill="none" v-html="small[l.icon]"></svg>
            <span v-fit="l.w">{{ l.text }}</span>
          </div>
        </div>
      </aside>
      <div class="vsplit"><i></i></div>

      <section class="canvas">
        <svg width="1026" height="640" viewBox="274 129 1026 640">
          <defs>
            <filter id="relief" x="0" y="0" width="1" height="1" color-interpolation-filters="sRGB">
              <feTurbulence type="fractalNoise" baseFrequency=".28 .35" numOctaves="3" seed="4" />
              <feColorMatrix values="0 0 0 1.900 -.1  0 0 0 1.900 -.1  0 0 0 1.900 -.1  0 0 0 0 1" />
            </filter>
            <filter id="plain" x="0" y="0" width="1" height="1" color-interpolation-filters="sRGB">
              <feTurbulence type="fractalNoise" baseFrequency=".2 .3" numOctaves="3" seed="8" />
              <feColorMatrix values="0 0 0 .8 .56  0 0 0 .8 .56  0 0 0 .8 .56  0 0 0 0 1" />
            </filter>
            <linearGradient id="sea" x1="0" y1="0" x2="0" y2="1">
              <stop offset="0" stop-color="#f0f0f0" /><stop offset=".26" stop-color="#f5f5f5" /><stop offset=".27" stop-color="#f2f2f2" /><stop offset=".7" stop-color="#f4f4f4" /><stop offset="1" stop-color="#f6f6f6" />
            </linearGradient>
          </defs>
          <rect x="349" y="140" width="671" height="600" fill="url(#sea)" />
          <polygon :points="land" fill="#f6f6f6" />
          <rect x="434" y="142" width="585" height="7" filter="url(#relief)" />
          <rect x="1012" y="147" width="7" height="583" filter="url(#plain)" />
          <rect x="432" y="731" width="588" height="7" filter="url(#plain)" opacity=".7" />
          <path d="M1019.500 143V724" stroke="#8b8b8b" stroke-width="2" />
          <path d="M435 140.500h23M458 141.500h20" stroke="#000" stroke-width="1" />
          <path d="M477 140H790Q800 142.500 815 141Q830 144 850 141H870Q890 142.500 910 140.500H950L1019 143V146H890V145H777V144H665V143H477Z" fill="#000" />
          <path d="M349.500 140V740" stroke="#111" />
          <polygon :points="area" fill="#b2df8a" stroke="#83506d" stroke-width="1.300" />
          <path :d="islets" fill="none" stroke="#7c4e6c" stroke-width="1.500" />
          <g stroke="#3a2c20" stroke-width="1" fill="#ff9e17"><circle v-for="(p, i) in orange" :key="i" :cx="p.x" :cy="p.y" r="3.800" /></g>
          <g stroke="#33302c" stroke-width="1" fill="#a8735a"><circle v-for="(p, i) in brown" :key="i" :cx="p.x" :cy="p.y" r="3.800" /></g>
        </svg>
      </section>
    </main>

    <footer>
      <div class="field search">
        <svg width="14" height="14" fill="none" stroke="#8f8d8b" stroke-width="1.500"><circle cx="5.300" cy="5.300" r="4.200" /><path d="M8.500 8.500 12.500 12" /></svg>
        <span v-fit="120">検索（Ctrl + K）</span>
      </div>
      <div class="lab"><span v-fit="178">1 個の凡例エントリが削除</span></div>
      <div class="lab"><span v-fit="30">座標</span></div>
      <div class="field coord"><span v-fit="123">458569,4648583</span></div>
      <div><svg class="mouse" width="17" height="16" fill="none"><path d="M1 3Q2 1 4 2L12 9Q15 12 12.500 14Q10 15.500 7 12.500L2 7Q0 5 1 3Z" fill="#c9c7c4" stroke="#333" /><path d="M2 7 6 2M5 10 9 5M4 2 3 8M7 4 5 10M10 6l4-4M8 8l5-6M1 4l6 7" stroke="#222" stroke-width="1" /><circle cx="11" cy="11.500" r="1.700" fill="#fff" stroke="#333" /></svg></div>
      <div class="lab"><span v-fit="30">縮尺</span></div>
      <div class="field combo"><span v-fit="69">1:235999</span><i><svg width="9" height="5"><path d="M0 0h9L4.500 5Z" fill="#555" /></svg></i></div>
      <div><svg class="lock" width="14" height="16"><path d="M3.300 8V5Q3.300 1.200 6.800 1.200T10.300 5V8" fill="none" stroke="#8b8987" stroke-width="2" /><rect x=".8" y="7" width="12" height="8" rx="1.500" fill="#5d5d5d" /></svg></div>
      <div class="lab"><span v-fit="30">拡大</span></div>
      <div class="field spin zoom"><span v-fit="40">100%</span><i><svg width="8" height="17"><path d="M0 4.500 4 0 8 4.500ZM0 12.500h8L4 17Z" fill="#5a5a5a" /></svg></i></div>
      <div class="lab"><span v-fit="30">回転</span></div>
      <div class="field spin rot"><span v-fit="29">0.0°</span><i><svg width="8" height="17"><path d="M0 4.500 4 0 8 4.500ZM0 12.500h8L4 17Z" fill="#5a5a5a" /></svg></i></div>
      <div><svg class="chk" width="14" height="14"><rect x=".5" y=".5" width="13" height="13" fill="#fff" stroke="#b9b5b1" /><path d="M4 7 6.300 10.300 9.800 3.300" fill="none" stroke="#000" stroke-width="2" /></svg></div>
      <div class="lab"><span v-fit="45">レンダ</span></div>
      <div><svg class="globe" width="16" height="15" fill="none" stroke="#ddd" stroke-width=".7"><path d="M4.500 2Q8-.5 11.500 2L15.500 7.500 12 11 8 14.500 4 11 .5 7.500Z" fill="#777" stroke="#777" /><path d="M1 7.500h14M3.500 4h9M8 0v14M5.500 1.500Q3 7 8 14M10.500 1.500Q13 7 8 14M4 10.500h8" /></svg></div>
      <div class="lab"><span v-fit="80">EPSG:3100</span></div>
      <div class="end">
        <svg class="bubble" width="17" height="16"><ellipse cx="8" cy="7" rx="7.800" ry="6" fill="#555" /><path d="M9 11 14.500 15 14 9Z" fill="#555" /><path d="M4 7h1.800M7.200 7H9M10.400 7h1.800" stroke="#fff" stroke-width="1.800" /></svg>
        <svg class="size" width="12" height="12" fill="#a5a29f"><path d="M9 0h1v1H9zM6 3h1v1H6zM9 3h1v1H9zM3 6h1v1H3zM6 6h1v1H6zM9 6h1v1H9zM0 9h1v1H0zM3 9h1v1H3zM6 9h1v1H6zM9 9h1v1H9z" /></svg>
      </div>
    </footer>
  </div>
</template>

<style>
body { margin: 0; overflow: hidden; }
</style>
<style scoped>
.window { width: 1300px; height: 804px; background: #efebe7; color: #000; font: 15px/21px "Noto Sans", "Noto Sans CJK JP", sans-serif; display: flex; flex-direction: column; overflow: hidden; white-space: nowrap; }
.window svg { display: block; flex: none; }
.window i { font-style: normal; }
span, b { display: inline-block; }
.titlebar { height: 24px; background: #444; color: #dcdcdc; display: grid; grid-template-columns: 579px 1fr 65px; line-height: 23px; flex: none; }
.titlebar b { justify-self: start; font-weight: 600; font-size: 15px; }
.menubar { height: 25px; border-bottom: 1px solid #d3cfcb; display: flex; padding-left: 9px; line-height: 24px; flex: none; }
.menubar u { text-decoration: underline; text-underline-offset: 3.5px; text-decoration-thickness: 1px; }
.toolbar { display: flex; align-items: center; background: linear-gradient(#f7f4f0, #edeae5); border-bottom: 1px solid #b6b3af; height: 38px; flex: none; box-sizing: content-box; }
.toolbar.second { height: 37px; }
.toolbar.second .tool { padding-top: 4px; }
.grip { width: 16px; height: 17px; flex: none; background: repeating-linear-gradient(#c3bfbb 0 1px, transparent 1px 3px) 8px 0 / 1px 100% no-repeat, repeating-linear-gradient(#c3bfbb 0 1px, transparent 1px 3px) 11px 0 / 1px 100% no-repeat; }
.grip.first { width: 13px; background-position: 5px 0, 8px 0; }
.tool { width: 32px; height: 31px; margin-right: 1px; box-sizing: border-box; padding: 3px 0 0 4px; flex: none; border-radius: 3px; }
.tool.on { background: #dddad6; box-shadow: inset 0 0 0 1px #aeaaa6; }
.more { margin-left: 27px; }
main { flex: 1; display: flex; min-height: 0; }
aside { width: 267px; display: flex; flex-direction: column; flex: none; }
.dock-title { height: 24px; display: flex; justify-content: space-between; align-items: center; padding-left: 4px; line-height: 24px; flex: none; }
.dock-title svg { margin-right: -1px; margin-top: 1px; }
.dock-tools { display: flex; align-items: center; flex: none; }
.browser-tools { height: 30px; padding: 0 0 1px 8px; }
.dock-tools span { width: 25px; }
.box { border: 1px solid #b6b3af; background: #fff; box-sizing: border-box; flex: none; }
.tree-box { height: 310px; display: grid; grid-template: 294px 14px / 251px 14px; }
.rows { overflow: hidden; }
.row { height: 21px; display: flex; align-items: center; padding-left: 46px; }
.row.top { padding-left: 26px; }
.row .arrow { margin-right: 10px; }
.row .ico { margin: -2px 6px 0 0; }
.row.sel { background: #308cc6; color: #e9f3fa; }
.vbar { border-left: 1px solid #b6b3af; display: flex; flex-direction: column; }
.btn { display: flex; align-items: center; justify-content: center; background: #f5f3f1; }
.vbar .btn { height: 13px; border-bottom: 1px solid #b6b3af; }
.vbar .btn.last { border-bottom: 0; border-top: 1px solid #b6b3af; }
.track { background: #e1dfdd; flex: 1; }
.vbar .track.a { flex: none; height: 46px; }
.vbar .thumb { height: 54px; background: linear-gradient(90deg, #fdfcfb, #f0eeec); border: solid #b6b3af; border-width: 1px 0; }
.hbar { display: flex; border-top: 1px solid #b6b3af; }
.hbar .btn { width: 13px; border-right: 1px solid #b6b3af; }
.hbar .btn.last { border: solid #b6b3af; border-width: 0 0 0 1px; }
.hbar .thumb { width: 162px; background: linear-gradient(#fdfcfb, #f0eeec); border-right: 1px solid #b6b3af; }
.corner { border: solid #b6b3af; border-width: 1px 0 0 1px; background: #efebe7; }
.split { height: 6px; display: flex; justify-content: center; padding-top: 1px; box-sizing: border-box; flex: none; }
.split i { width: 17px; height: 1px; background: repeating-linear-gradient(90deg, #aaa7a4 0 1px, transparent 1px 3px); }
.layers-title { margin-top: -1px; }
.layer-tools { height: 30px; padding: 0 0 1px 8px; }
.dock-tools .ldrop { margin: 0 4px 0 -4px; width: 12px; }
.layer-box { height: 217px; }
.layer { font-weight: 700; padding-left: 6px; }
.layer .check { margin: -1px 6px 0 0; }
.layer.off { color: #bebebe; }
.layer.sel span { border-bottom: 1px solid #e9f3fa; line-height: 17px; }
.vsplit { width: 6px; display: flex; justify-content: center; }
.vsplit i { width: 1px; height: 17px; margin-top: 315px; background: repeating-linear-gradient(#aaa7a4 0 1px, transparent 1px 3px); }
.canvas { flex: 1; margin-top: 1px; height: 640px; border: solid #b6b3af; border-width: 1px 0 1px 1px; background: #fff; }
footer { height: 34px; flex: none; padding-left: 4px; display: grid; align-items: center; grid-template-columns: 208px 186px 33px 133px 32px 33px 106px 33px 33px 110px 39px 103px 19px 62px 20px 100px 42px; }
footer .field { height: 29px; box-sizing: border-box; border: 1px solid #b0aca8; border-radius: 3px; background: #fff; display: flex; align-items: center; padding-left: 3px; overflow: hidden; }
footer .field span { margin-top: -1px; }
footer .zoom span, footer .rot span { margin-left: 1px; }
footer .lab { margin-top: -1px; }
footer .field i { margin-left: auto; align-self: stretch; border-left: 1px solid #b6b3af; background: linear-gradient(#fbfaf9, #eceae7); display: flex; align-items: center; justify-content: center; flex: none; }
.search { width: 200px; color: #8e8c8a; }
footer .search { padding-left: 8px; }
.search span { margin-left: 6px; }
.coord { width: 132px; }
.combo { width: 106px; }
.combo i { width: 19px; }
.spin i { width: 14px; }
.zoom { width: 101px; }
.rot { width: 97px; }
.chk { margin-top: -1px; }
.mouse { margin-left: 4px; }
.lock { margin-left: 6px; }
.end { position: relative; height: 34px; display: flex; align-items: center; }
.size { position: absolute; right: 0; bottom: 0; }
</style>
